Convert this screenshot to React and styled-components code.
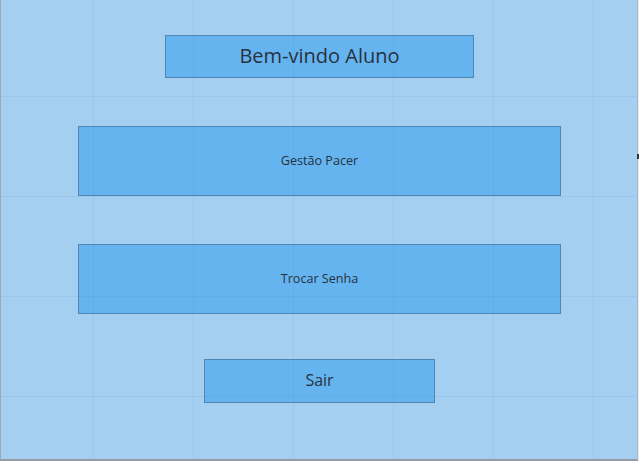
import styled, { createGlobalStyle } from "styled-components"

const GlobalStyle = createGlobalStyle`
    html, body {
        margin: 0;
        padding: 0;
        background: #e9eef2;
    }
    body {
        font-family: "Open Sans", "Liberation Sans", sans-serif;
    }
`

const Screen = styled.div`
    position: relative;
    box-sizing: border-box;
    width: 638px;
    height: 461px;
    background-color: #a4cff0;
    border-left: 1px solid #9ea9b3;
    border-bottom: 2px solid #929da7;
    border-right: 1px solid #a9b6c2;
    display: flex;
    flex-direction: column;
    align-items: center;
    padding: 35px 0 0 1px;

    /* grid overlay sits on top of the panels */
    &::after {
        content: "";
        position: absolute;
        inset: 0;
        pointer-events: none;
        background-image:
            linear-gradient(to right, rgba(60, 110, 160, 0.07) 1px, transparent 1px),
            linear-gradient(to bottom, rgba(60, 110, 160, 0.09) 1px, transparent 1px);
        background-size: 100px 100px;
        background-position: 92px 96px;
    }
`

const Panel = styled.div`
    box-sizing: border-box;
    width: ${({ $w }) => $w}px;
    height: ${({ $h }) => $h}px;
    margin-bottom: ${({ $gap }) => $gap || 0}px;
    padding-bottom: 2px;
    background-color: #65b4ef;
    border: 1px solid #4f86b3;
    display: flex;
    align-items: center;
    justify-content: center;
    color: #27323d;
    font-size: ${({ $size }) => $size}px;
    cursor: pointer;
`

const Marker = styled.span`
    position: absolute;
    right: -2px;
    top: 154px;
    width: 2px;
    height: 5px;
    background: #333;
`

const App = () => {
    return (
        <>
            <GlobalStyle />
            <Screen>
                <Panel $w={309} $h={43} $gap={48} $size={20}>Bem-vindo Aluno</Panel>
                <Panel $w={483} $h={70} $gap={48} $size={12.6}>Gestão Pacer</Panel>
                <Panel $w={483} $h={70} $gap={45} $size={12.6}>Trocar Senha</Panel>
                <Panel $w={231} $h={44} $size={16}>Sair</Panel>
                <Marker />
            </Screen>
        </>
    )
}

export default App
